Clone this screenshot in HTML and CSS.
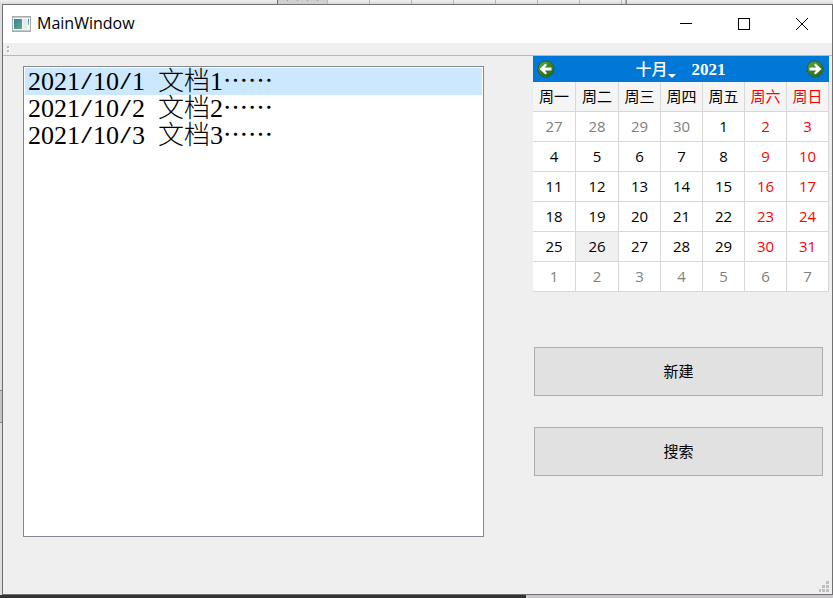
FILE: index.html
```html
<!DOCTYPE html>
<html lang="zh-CN">
<head>
<meta charset="utf-8">
<title>MainWindow</title>
<link rel="stylesheet" href="styles.css">
</head>
<body>
<div class="backdrop-top"><div class="sheet"><i></i><i></i><i></i><i></i><i></i><i></i><i></i><i></i><i></i></div></div>
<div class="desktop">
  <div class="backdrop-left"></div>
  <div class="window">
    <header class="titlebar">
      <svg class="app-icon" width="19" height="16" viewBox="0 0 19 16" aria-hidden="true">
        <defs>
          <linearGradient id="pane" x1="0" y1="0" x2="1" y2="1"><stop offset="0" stop-color="#3f7fa3"/><stop offset="1" stop-color="#5cab76"/></linearGradient>
          <linearGradient id="slim" x1="0" y1="0" x2="0" y2="1"><stop offset="0" stop-color="#3f78b8"/><stop offset="1" stop-color="#76bd8b"/></linearGradient>
        </defs>
        <rect x="0.5" y="0.5" width="18" height="15" fill="#f4f5f6" stroke="#a5acb0"/>
        <path d="M1 1.5H18" stroke="#c8cdd0"/>
        <rect x="2" y="3" width="8" height="10" fill="url(#pane)"/>
        <rect x="11" y="3" width="4" height="10" fill="#e7eaeb"/>
        <rect x="16" y="3" width="1" height="6" fill="url(#slim)"/>
        <path d="M1 14.5H18" stroke="#c3c7c9"/>
      </svg>
      <h1>MainWindow</h1>
      <div class="window-controls">
        <button type="button" aria-label="Minimize"><svg width="12" height="12" viewBox="0 0 12 12"><path d="M0 5.5H12" stroke="#000"/></svg></button>
        <button type="button" aria-label="Maximize"><svg width="12" height="12" viewBox="0 0 12 12"><rect x="0.5" y="0.5" width="11" height="11" fill="none" stroke="#000"/></svg></button>
        <button type="button" aria-label="Close"><svg width="12" height="12" viewBox="0 0 12 12"><path d="M0 0L12 12M12 0L0 12" stroke="#000"/></svg></button>
      </div>
    </header>
    <div class="toolbar">
      <svg width="3" height="7" viewBox="0 0 3 7" aria-hidden="true"><path d="M1 1h2v2h-2zM1 5h2v2h-2z" fill="#fff"/><path d="M0 0h2v2h-2zM0 4h2v2h-2z" fill="#b4b4b4"/></svg>
    </div>
    <main>
      <ul class="documents" role="listbox" aria-label="文档">
        <li role="option" aria-selected="true">2021<span class="cell">/</span>10<span class="cell">/</span>1<span class="cell"> </span>文档1<span class="dots">……</span></li>
        <li role="option" aria-selected="false">2021<span class="cell">/</span>10<span class="cell">/</span>2<span class="cell"> </span>文档2<span class="dots">……</span></li>
        <li role="option" aria-selected="false">2021<span class="cell">/</span>10<span class="cell">/</span>3<span class="cell"> </span>文档3<span class="dots">……</span></li>
      </ul>
      <aside>
        <section class="calendar">
          <div class="calendar-nav">
            <button type="button" aria-label="Previous month">
              <svg width="18" height="18" viewBox="0 0 18 18">
                <defs><linearGradient id="green" x1="0" y1="0" x2="0.6" y2="1"><stop offset="0" stop-color="#6dab45"/><stop offset="0.5" stop-color="#3f8527"/><stop offset="1" stop-color="#2b6b1b"/></linearGradient></defs>
                <circle cx="9" cy="9" r="8" fill="url(#green)" stroke="#2a6432"/>
                <path d="M2.5 9L8.5 3.5L10 5L7.7 7.5H14.5V10.5H7.7L10 13L8.5 14.5Z" fill="#fff"/>
              </svg>
            </button>
            <div class="calendar-title">
              <button type="button" class="month">十月<svg width="8" height="4" viewBox="0 0 8 4" aria-hidden="true"><path d="M0 0H8L4 4Z" fill="#fff"/></svg></button>
              <button type="button" class="year">2021</button>
            </div>
            <button type="button" aria-label="Next month">
              <svg width="18" height="18" viewBox="0 0 18 18">
                <circle cx="9" cy="9" r="8" fill="url(#green)" stroke="#2a6432"/>
                <path d="M15.5 9L9.5 3.5L8 5L10.3 7.5H3.5V10.5H10.3L8 13L9.5 14.5Z" fill="#fff"/>
              </svg>
            </button>
          </div>
          <table>
            <colgroup><col class="wide" span="2"><col span="5"></colgroup>
            <thead><tr><th>周一</th><th>周二</th><th>周三</th><th>周四</th><th>周五</th><th>周六</th><th>周日</th></tr></thead>
            <tbody>
              <tr><td class="other">27</td><td class="other">28</td><td class="other">29</td><td class="other">30</td><td>1</td><td>2</td><td>3</td></tr>
              <tr><td>4</td><td>5</td><td>6</td><td>7</td><td>8</td><td>9</td><td>10</td></tr>
              <tr><td>11</td><td>12</td><td>13</td><td>14</td><td>15</td><td>16</td><td>17</td></tr>
              <tr><td>18</td><td>19</td><td>20</td><td>21</td><td>22</td><td>23</td><td>24</td></tr>
              <tr><td>25</td><td class="today">26</td><td>27</td><td>28</td><td>29</td><td>30</td><td>31</td></tr>
              <tr><td class="other">1</td><td class="other">2</td><td class="other">3</td><td class="other">4</td><td class="other">5</td><td class="other">6</td><td class="other">7</td></tr>
            </tbody>
          </table>
        </section>
        <div class="actions">
          <button type="button">新建</button>
          <button type="button">搜索</button>
        </div>
      </aside>
    </main>
    <footer>
      <svg width="10" height="11" viewBox="0 0 10 11" aria-hidden="true"><path d="M7 0h3v3h-3zM3 4h3v3h-3zM7 4h3v3h-3zM0 8h2v3h-2zM3 8h3v3h-3zM7 8h3v3h-3z" fill="#bfbfbf"/></svg>
    </footer>
  </div>
</div>
<div class="backdrop-bottom"></div>
</body>
</html>
```
FILE: styles.css
```css
* {
  box-sizing: border-box;
}

body {
  margin: 0;
  min-height: 100vh;
  display: flex;
  flex-direction: column;
  background: #e4e4e4;
  color: #000;
  font-family: "Open Sans", "Noto Sans CJK SC", sans-serif;
  font-size: 15px;
}

button {
  margin: 0;
  padding: 0;
  border: 0;
  background: none;
  color: inherit;
  font: inherit;
}

svg {
  display: block;
}

/* Edges of the windows behind this one */
.backdrop-top {
  height: 4px;
  display: flex;
  padding-left: 277px;
  background: linear-gradient(#f0f0f0, #d9d9d9);
}

.sheet {
  display: flex;
  border-left: 1px solid #6e6e6e;
  border-right: 1px solid #8c8c8c;
}

.sheet i {
  width: 42px;
  border-right: 1px solid #b5b5b5;
}

.sheet i:first-child {
  width: 50px;
  background: repeating-linear-gradient(90deg, transparent 0 9px, #999 9px 10px) 0 0 / 100% 1px no-repeat #cfcfcf;
}

.sheet i:last-child {
  width: 4px;
}

.desktop {
  flex: 1;
  display: flex;
}

.backdrop-left {
  width: 2px;
  background: linear-gradient(#888 0 1px, #c4c4c4 1px 32px, #888 32px 33px) 0 386px / 100% 33px no-repeat #dedede;
}

.backdrop-bottom {
  height: 3px;
  background: linear-gradient(90deg, #333 526px, #c9c7c9 526px);
}

.window {
  flex: 1;
  display: flex;
  flex-direction: column;
  border: 1px solid #707070;
  background: #efefef;
}

.titlebar {
  height: 38px;
  display: flex;
  align-items: center;
  padding: 0 1px 0 9px;
  background: #fff;
}

.titlebar h1 {
  margin: 0 auto 0 6px;
  padding-bottom: 2px;
  font-size: 16px;
  line-height: 20px;
  font-weight: 400;
}

.window-controls {
  display: flex;
}

.window-controls button {
  width: 58px;
  height: 38px;
  display: grid;
  place-items: center;
}

.toolbar {
  height: 13px;
  padding: 3px 4px;
  border-bottom: 1px solid #b8b8b8;
}

main {
  flex: 1;
  display: grid;
  grid-template-columns: minmax(0, 1fr) 296px;
  gap: 49px;
  padding: 0 3px 35px 20px;
}

.documents {
  margin: 10px 0 0;
  padding: 1px;
  list-style: none;
  background: #fff;
  border: 1px solid #828790;
  font-family: "Liberation Serif", "Noto Sans CJK SC", serif;
  font-size: 26px;
  font-weight: 300;
}

.documents li {
  height: 27px;
  display: flex;
  padding-left: 3px;
  line-height: 27px;
  white-space: nowrap;
}

.documents li[aria-selected="true"] {
  background: #cce8ff;
}

/* Slashes and spaces take the same half-width column as a digit */
.cell {
  width: 13px;
  height: 27px;
  font-family: "Liberation Mono", monospace;
  font-size: 22px;
  line-height: 32px;
  text-align: center;
}

.dots {
  font-family: "Noto Sans CJK SC", sans-serif;
  font-size: 25px;
  font-weight: 400;
  line-height: 22px;
}

.calendar-nav {
  height: 26px;
  display: flex;
  align-items: center;
  justify-content: space-between;
  padding: 0 5px 0 4px;
  background: #0078d7;
  color: #fff;
}

.calendar-title {
  display: flex;
  align-items: center;
  gap: 16px;
}

.month {
  display: flex;
  align-items: flex-end;
  font-size: 16px;
  font-weight: 500;
  line-height: 24px;
}

.month svg {
  margin-bottom: 3px;
}

.year {
  padding-top: 2px;
  font-family: "Liberation Serif", serif;
  font-size: 17px;
  font-weight: 700;
}

table {
  width: 100%;
  table-layout: fixed;
  border-collapse: separate;
  border-spacing: 0;
  background: #fff;
}

.wide {
  width: 43px;
}

th,
td {
  height: 30px;
  padding: 0 0 2px;
  border-right: 1px solid #d8d8d8;
  border-bottom: 1px solid #d8d8d8;
  font-weight: 400;
  line-height: 20px;
  text-align: center;
}

th {
  background: #f5f5f5;
}

th:nth-child(n + 6),
td:nth-child(n + 6) {
  color: #f00;
}

td.other {
  color: #808080;
}

td.today {
  background: #f0f0f0;
}

.actions {
  display: grid;
  gap: 31px;
  margin: 55px 6px 0 1px;
}

.actions button {
  height: 49px;
  padding-bottom: 2px;
  border: 1px solid #adadad;
  background: #e1e1e1;
}

footer {
  height: 22px;
  display: flex;
  align-items: flex-end;
  justify-content: flex-end;
  padding: 0 3px 2px 0;
}
```
